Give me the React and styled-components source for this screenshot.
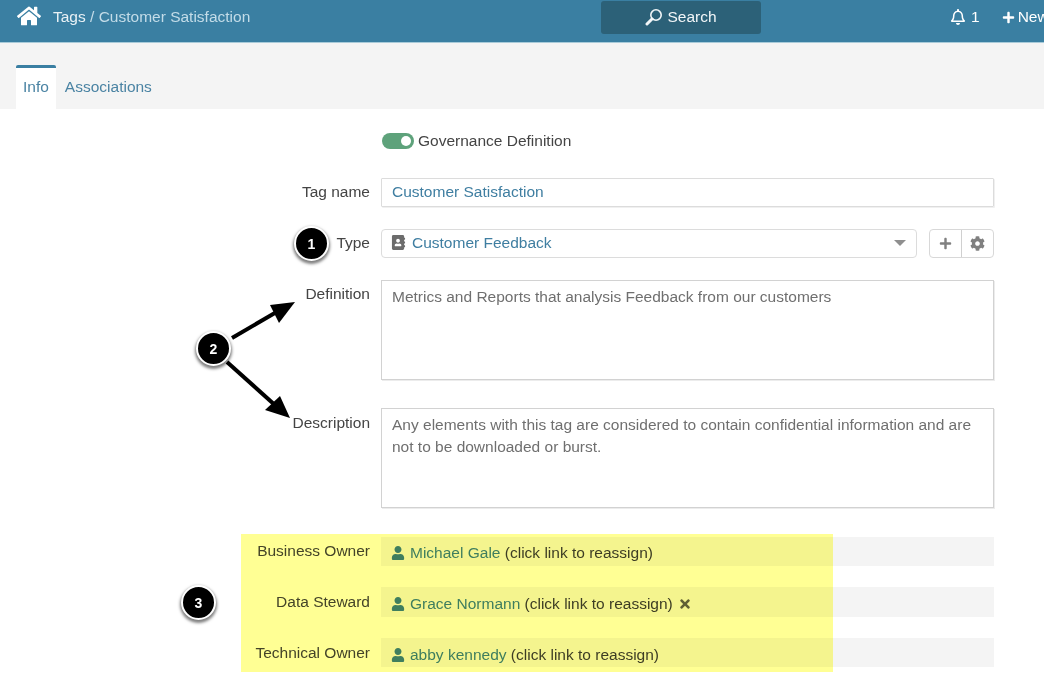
import styled, { createGlobalStyle } from "styled-components";
import { FaHome, FaRegBell, FaPlus, FaAddressBook, FaCog, FaUser, FaTimes } from "react-icons/fa";

const GlobalStyle = createGlobalStyle`
  html, body {
    margin: 0;
    padding: 0;
    background: #fff;
    font-family: "Liberation Sans", Arial, sans-serif;
    font-size: 15.5px;
    color: #444;
  }
`;

const Page = styled.div`
  position: relative;
  width: 1044px;
  height: 693px;
  overflow: hidden;
`;

const Header = styled.header`
  height: 42px;
  background: #3a7fa2;
  border-bottom: 1px solid #a9cbd9;
  display: flex;
  align-items: flex-start;
  white-space: nowrap;
  color: #fff;
`;

const Brand = styled.div`
  width: 601px;
  flex: none;
  display: flex;
  align-items: center;
  gap: 12px;
  padding-left: 17px;
  box-sizing: border-box;
  height: 32px;
`;

const Crumb = styled.div`
  color: #c3dce8;
  padding-top: 2px;
  b {
    font-weight: normal;
    color: #e8f1f5;
  }
`;

const SearchBox = styled.div`
  width: 160px;
  height: 33px;
  flex: none;
  margin-top: 1px;
  background: #2c6178;
  border-radius: 3px;
  display: flex;
  align-items: center;
  justify-content: center;
  gap: 4px;
  padding-bottom: 1px;
  box-sizing: border-box;
  color: #f2f6f8;
`;

const HeaderItem = styled.div`
  display: flex;
  align-items: center;
  gap: ${(p) => p.$gap || 5}px;
  height: 34px;
  margin-left: ${(p) => p.$left}px;
  flex: none;
`;

const TabBar = styled.nav`
  height: 66px;
  background: #f4f4f4;
  display: flex;
  align-items: flex-start;
  padding: 22px 0 0 16px;
  box-sizing: border-box;
`;

const Tab = styled.div`
  box-sizing: border-box;
  height: 44px;
  padding: 0 ${(p) => (p.$active ? 7 : 9)}px 3px;
  display: flex;
  align-items: center;
  color: #4a83a3;
  background: ${(p) => (p.$active ? "#fff" : "transparent")};
  border-top: 3px solid ${(p) => (p.$active ? "#3a7fa2" : "transparent")};
  border-radius: 2px 2px 0 0;
`;

const Form = styled.main`
  display: flex;
  flex-direction: column;
  padding-top: 21px;
`;

const Row = styled.div`
  display: grid;
  grid-template-columns: 370px 613px;
  column-gap: 11px;
  margin-bottom: ${(p) => p.$after || 0}px;
  align-items: ${(p) => (p.$top ? "start" : "center")};
`;

const Label = styled.label`
  text-align: right;
  color: #444;
  padding-top: ${(p) => p.$pad || 0}px;
  padding-bottom: ${(p) => p.$lift || 0}px;
`;

const Switch = styled.span`
  display: inline-block;
  position: relative;
  width: 32px;
  height: 16px;
  border-radius: 8px;
  background: #5ea27b;
  &::after {
    content: "";
    position: absolute;
    right: 3px;
    top: 3px;
    width: 10px;
    height: 10px;
    border-radius: 50%;
    background: #fff;
  }
`;

const ToggleWrap = styled.div`
  display: flex;
  align-items: center;
  gap: 4px;
  height: 22px;
  padding-left: 1px;
`;

const Input = styled.div`
  box-sizing: border-box;
  height: ${(p) => p.$h || 29}px;
  border: 1px solid #dcdcdc;
  border-radius: 1px;
  box-shadow: 1px 1px 0 #f0f0f0;
  padding: 0 10px 2px;
  display: flex;
  align-items: center;
  color: #3f7ea1;
`;

const TypeLine = styled.div`
  display: flex;
  gap: 12px;
`;

const Select = styled(Input)`
  flex: 1;
  border-radius: 4px;
  box-shadow: none;
  gap: 6px;
  padding: 0 10px 2px 9px;
  svg {
    color: #6c6c6c;
  }
`;

const Caret = styled.span`
  margin-left: auto;
  width: 0;
  height: 0;
  border-left: 6px solid transparent;
  border-right: 6px solid transparent;
  border-top: 6px solid #8f8f8f;
`;

const IconGroup = styled.div`
  display: flex;
  width: 65px;
  box-sizing: border-box;
  height: 29px;
  border: 1px solid #d8d8d8;
  border-radius: 4px;
`;

const IconBtn = styled.div`
  flex: 1;
  display: flex;
  align-items: center;
  justify-content: center;
  color: #808080;
  & + & {
    border-left: 1px solid #d0d0d0;
  }
`;

const TextBox = styled.div`
  box-sizing: border-box;
  height: ${(p) => p.$h}px;
  border: 1px solid #d2d2d2;
  box-shadow: 1px 1px 0 #ececec;
  padding: 5px 10px;
  line-height: 22px;
  color: #6f6f6f;
`;

const Owner = styled.div`
  box-sizing: border-box;
  height: ${(p) => p.$h || 29}px;
  background: #f4f4f4;
  display: flex;
  align-items: center;
  padding: ${(p) => p.$pad}px 0 0 10px;
  color: #3d3d3d;
  white-space: pre;
  svg {
    color: #3f7ea1;
    margin-right: 5px;
  }
`;

const OwnerLink = styled.span`
  color: #3f7ea1;
`;

const Remove = styled.span`
  display: flex;
  margin-left: 5px;
  svg {
    color: #60605a;
    margin: 0;
  }
`;

const Highlight = styled.div`
  position: absolute;
  left: 241px;
  top: 534px;
  width: 592px;
  height: 138px;
  background: #ffff94;
  mix-blend-mode: multiply;
`;

const Arrows = styled.svg`
  position: absolute;
  left: 0;
  top: 0;
  pointer-events: none;
`;

const Badge = styled.div`
  position: absolute;
  left: ${(p) => p.$x - 17}px;
  top: ${(p) => p.$y - 17}px;
  width: 31px;
  height: 31px;
  border-radius: 50%;
  background: #000;
  border: 2px solid #fff;
  box-shadow: 0 2px 3px 1px rgba(0, 0, 0, 0.5);
  color: #fff;
  font-weight: bold;
  font-size: 14px;
  display: flex;
  align-items: center;
  justify-content: center;
`;

const owners = [
  { label: "Business Owner", name: "Michael Gale", h: 29, after: 21, lift: 2, pad: 2 },
  { label: "Data Steward", name: "Grace Normann", h: 30, after: 21, lift: 0, pad: 4, removable: true },
  { label: "Technical Owner", name: "abby kennedy", h: 29, after: 0, lift: 0, pad: 4 },
];

export default function App() {
  return (
    <Page>
      <GlobalStyle />
      <Header>
        <Brand>
          <FaHome size={24} color="#fff" />
          <Crumb>
            <b>Tags</b> / Customer Satisfaction
          </Crumb>
        </Brand>
        <SearchBox>
          <svg width="18" height="18" viewBox="0 0 18 18" fill="none" stroke="#f2f6f8">
            <circle cx="11" cy="7" r="5.2" strokeWidth="1.6" />
            <path d="M7 11 L2 16" strokeWidth="3" strokeLinecap="round" />
          </svg>
          Search
        </SearchBox>
        <HeaderItem $left={189}>
          <FaRegBell size={16} />1
        </HeaderItem>
        <HeaderItem $left={22} $gap={3}>
          <FaPlus size={13} />
          New
        </HeaderItem>
      </Header>
      <TabBar>
        <Tab $active>Info</Tab>
        <Tab>Associations</Tab>
      </TabBar>
      <Form>
        <Row $after={26}>
          <span />
          <ToggleWrap>
            <Switch />
            Governance Definition
          </ToggleWrap>
        </Row>
        <Row $after={22}>
          <Label $lift={2}>Tag name</Label>
          <Input>Customer Satisfaction</Input>
        </Row>
        <Row $after={22}>
          <Label $lift={2}>Type</Label>
          <TypeLine>
            <Select>
              <FaAddressBook size={15} />
              Customer Feedback
              <Caret />
            </Select>
            <IconGroup>
              <IconBtn>
                <FaPlus size={13} />
              </IconBtn>
              <IconBtn>
                <FaCog size={15} />
              </IconBtn>
            </IconGroup>
          </TypeLine>
        </Row>
        <Row $top $after={28}>
          <Label $pad={5}>Definition</Label>
          <TextBox $h={100}>Metrics and Reports that analysis Feedback from our customers</TextBox>
        </Row>
        <Row $top $after={29}>
          <Label $pad={6}>Description</Label>
          <TextBox $h={100}>
            Any elements with this tag are considered to contain confidential information and are not to be downloaded or burst.
          </TextBox>
        </Row>
        {owners.map((o) => (
          <Row key={o.label} $after={o.after}>
            <Label $lift={o.lift}>{o.label}</Label>
            <Owner $h={o.h} $pad={o.pad}>
              <FaUser size={14} />
              <OwnerLink>{o.name}</OwnerLink> (click link to reassign)
              {o.removable && (
                <Remove>
                  <FaTimes size={14} />
                </Remove>
              )}
            </Owner>
          </Row>
        ))}
      </Form>
      <Highlight />
      <Arrows width="1044" height="693" viewBox="0 0 1044 693">
        <path d="M232 338 L280 310" stroke="#000" strokeWidth="4" fill="none" />
        <polygon points="295,302 270,305 279,323" fill="#000" />
        <path d="M227 362 L276 406" stroke="#000" strokeWidth="4" fill="none" />
        <polygon points="290,418 280,396 265,410" fill="#000" />
      </Arrows>
      <Badge $x={311} $y={243}>1</Badge>
      <Badge $x={213} $y={348}>2</Badge>
      <Badge $x={198} $y={602}>3</Badge>
    </Page>
  );
}
